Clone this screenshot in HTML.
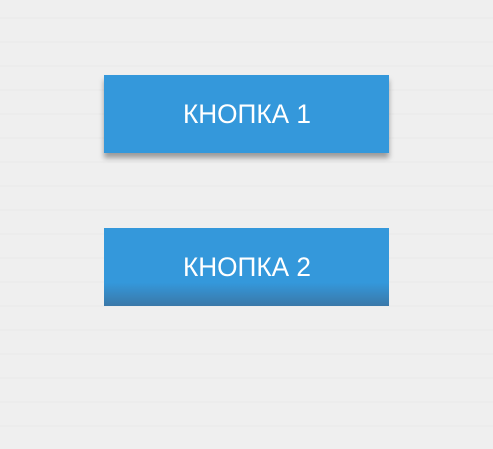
<!DOCTYPE html>
<html><head><meta charset="utf-8"><style>
html,body{margin:0;width:493px;height:449px;overflow:hidden;background:#efefef;}
body{position:relative;background:
repeating-linear-gradient(0deg,#efefef 0 22px,#ececec 22px 24px);}
.b{position:absolute;left:104px;width:285px;height:78px;background:#3498db;color:#fff;
font-family:"Liberation Sans",sans-serif;font-size:27px;
display:flex;align-items:center;justify-content:center;}
.b span{display:inline-block;transform:scaleX(0.97);}
.b1{top:75px;box-shadow:0 5px 5px rgba(0,0,0,0.35);}
.b2{top:228px;background:linear-gradient(#3498db 0,#3498db 70%,#3a78a8 100%);}
</style></head><body>
<div class="b b1"><span>КНОПКА 1</span></div>
<div class="b b2"><span>КНОПКА 2</span></div>
</body></html>
